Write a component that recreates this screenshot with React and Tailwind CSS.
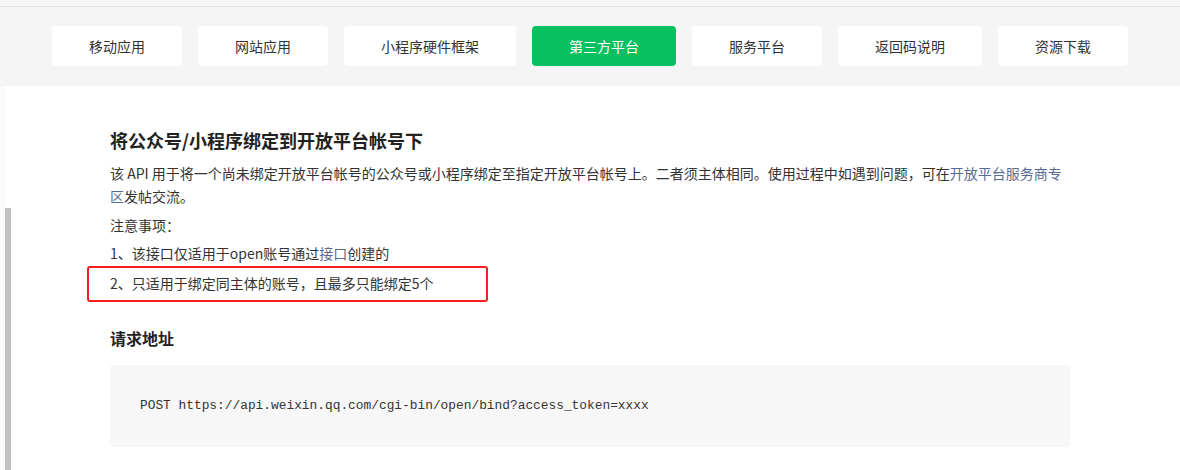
import React from 'react';

const tabs = ['移动应用', '网站应用', '小程序硬件框架', '第三方平台', '服务平台', '返回码说明', '资源下载'];

export default function App() {
  return (
    <div
      className="w-[1180px] h-[470px] overflow-hidden bg-white text-[#333]"
      style={{ fontFamily: "'Noto Sans CJK SC', 'Noto Sans', sans-serif" }}
    >
      <div className="h-[7px] bg-[#f5f5f5] border-b border-[#e4e4e4]" />
      <nav className="bg-[#f5f5f5] pt-[19px] pb-[20px] flex justify-center gap-4">
        {tabs.map((t) => (
          <button
            key={t}
            className={
              t === '第三方平台'
                ? 'h-10 min-w-[130px] px-[37px] rounded bg-[#07c160] text-white text-sm'
                : 'h-10 min-w-[130px] px-[37px] rounded bg-white text-[#333] text-sm'
            }
          >
            {t}
          </button>
        ))}
      </nav>

      <div className="flex h-[384px]">
        <div className="w-[5px] bg-[#fafafa]" />
        <div className="w-[6px] flex flex-col">
          <div className="mt-[122px] flex-1 bg-[#c1c1c1]" />
        </div>

        <main className="pl-[99px] pt-[40px]">
          <div className="w-[960px]">
            <h2 className="text-[18px] leading-[28px] font-bold text-[#222]">
              将公众号/小程序绑定到开放平台帐号下
            </h2>
            <p className="mt-[8px] text-sm leading-[23px]">
              该 API 用于将一个尚未绑定开放平台帐号的公众号或小程序绑定至指定开放平台帐号上。二者须主体相同。使用过程中如遇到问题，可在
              <a className="text-[#576b95]">开放平台服务商专区</a>发帖交流。
            </p>
            <p className="mt-[6px] text-sm leading-[23px]">注意事项：</p>
            <p className="mt-[5px] text-sm leading-[23px]">
              1、该接口仅适用于open账号通过<a className="text-[#576b95]">接口</a>创建的
            </p>
            <p className="relative mt-[7px] text-sm leading-[23px]">
              2、只适用于绑定同主体的账号，且最多只能绑定5个
              <span className="absolute left-[-23px] top-[-6px] w-[401px] h-[36px] border-2 border-[#fa1e1e] rounded-[3px]" />
            </p>

            <h3 className="mt-[31px] text-base leading-6 font-bold text-[#222]">请求地址</h3>
            <div className="mt-[15px] h-[82px] flex items-center px-[30px] bg-[#f7f7f7] rounded">
              <code
                className="text-[12.85px] leading-[22px] text-[#333]"
                style={{ fontFamily: "'Liberation Mono', monospace" }}
              >
                POST https://api.weixin.qq.com/cgi-bin/open/bind?access_token=xxxx
              </code>
            </div>
          </div>
        </main>
      </div>
    </div>
  );
}
